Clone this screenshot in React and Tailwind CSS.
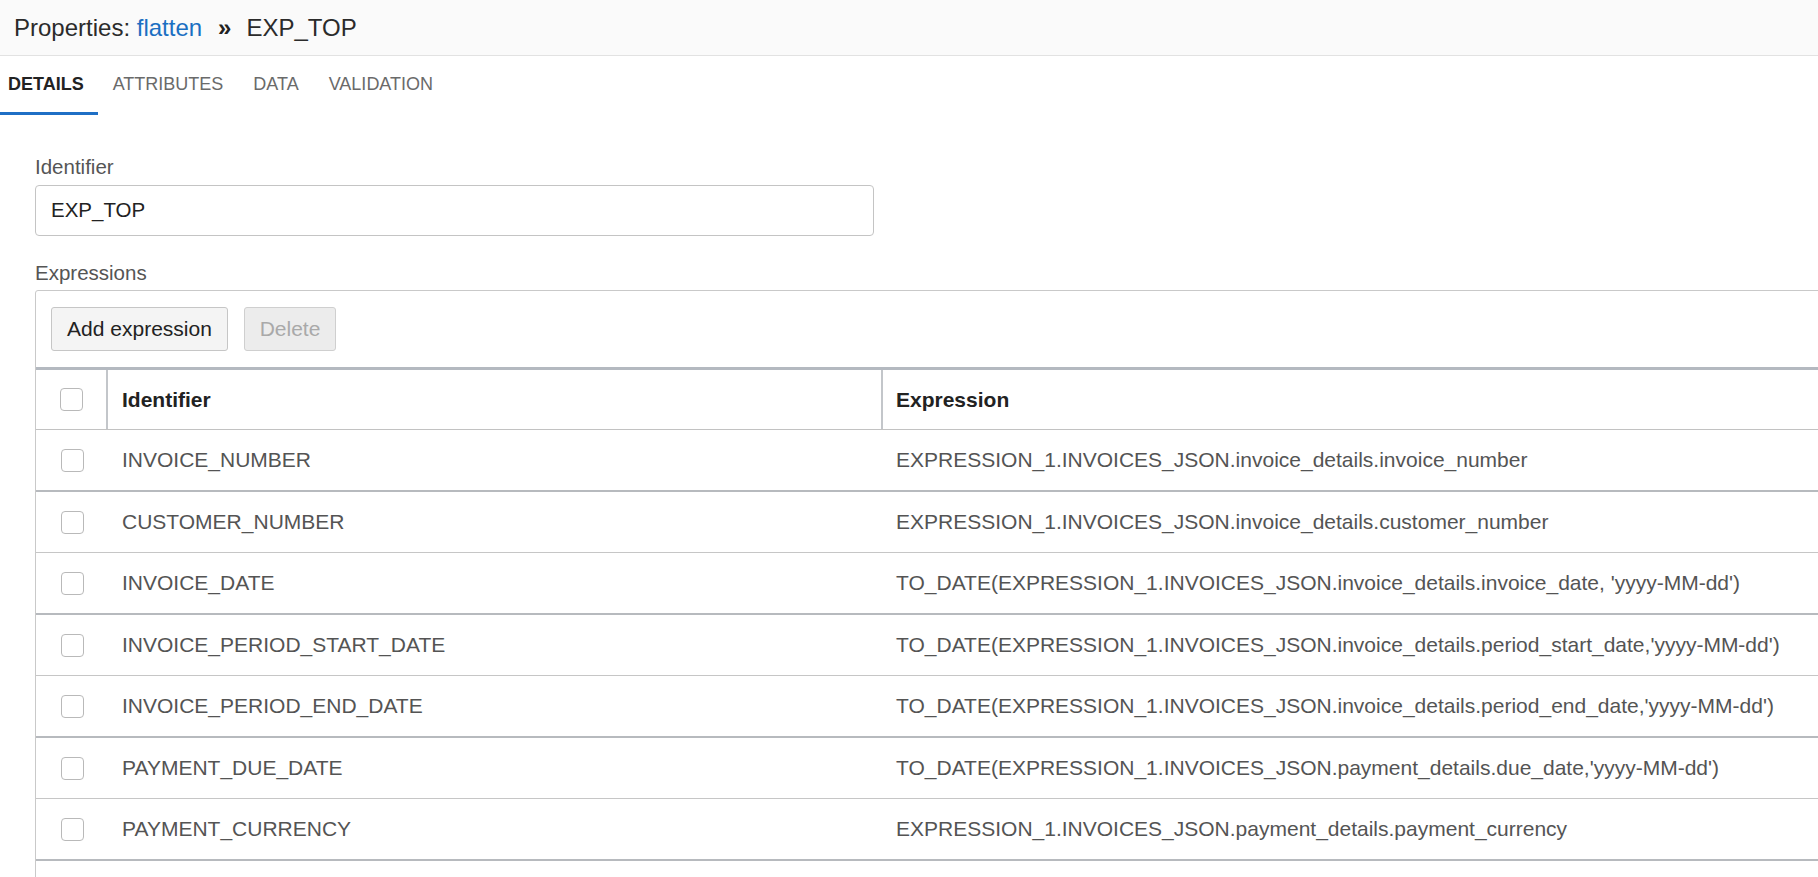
import React from "react";

const rows = [
  ["INVOICE_NUMBER", "EXPRESSION_1.INVOICES_JSON.invoice_details.invoice_number"],
  ["CUSTOMER_NUMBER", "EXPRESSION_1.INVOICES_JSON.invoice_details.customer_number"],
  ["INVOICE_DATE", "TO_DATE(EXPRESSION_1.INVOICES_JSON.invoice_details.invoice_date, 'yyyy-MM-dd')"],
  ["INVOICE_PERIOD_START_DATE", "TO_DATE(EXPRESSION_1.INVOICES_JSON.invoice_details.period_start_date,'yyyy-MM-dd')"],
  ["INVOICE_PERIOD_END_DATE", "TO_DATE(EXPRESSION_1.INVOICES_JSON.invoice_details.period_end_date,'yyyy-MM-dd')"],
  ["PAYMENT_DUE_DATE", "TO_DATE(EXPRESSION_1.INVOICES_JSON.payment_details.due_date,'yyyy-MM-dd')"],
  ["PAYMENT_CURRENCY", "EXPRESSION_1.INVOICES_JSON.payment_details.payment_currency"],
  ["", ""],
];

function Checkbox() {
  return (
    <span className="block w-[23px] h-[23px] rounded-[4px] border border-[#b9b9b9] bg-white" />
  );
}

export default function App() {
  return (
    <div className="h-screen w-full overflow-hidden bg-white font-['Liberation_Sans',Arial,sans-serif]">
      {/* Title bar */}
      <div className="h-[56px] bg-[#fafafa] border-b border-[#e2e2e2] flex items-center pl-[14px] text-[24px] text-[#2b2b2b]">
        <span>Properties:&nbsp;</span>
        <span className="text-[#1a6fc2]">flatten</span>
        <span className="font-bold text-[#222] pl-[16px] pr-[15px]">»</span>
        <span>EXP_TOP</span>
      </div>

      {/* Tabs */}
      <div className="h-[59px] flex text-[18px]">
        <div className="h-full flex items-center pl-[8px] pr-[14px] border-b-[3px] border-[#1f6fc5] font-bold text-[#222]">
          DETAILS
        </div>
        <div className="h-full flex items-center px-[15px] border-b-[3px] border-transparent text-[#6a6a6a]">
          ATTRIBUTES
        </div>
        <div className="h-full flex items-center px-[15px] border-b-[3px] border-transparent text-[#6a6a6a]">
          DATA
        </div>
        <div className="h-full flex items-center px-[15px] border-b-[3px] border-transparent text-[#6a6a6a]">
          VALIDATION
        </div>
      </div>

      {/* Content */}
      <div className="pl-[35px] pt-[40px]">
        <div className="text-[20.5px] leading-[24px] text-[#555]">Identifier</div>
        <div className="mt-[6px] w-[839px] h-[51px] rounded-[4px] border border-[#c4c4c4] flex items-center pl-[15px] text-[20.5px] text-[#222]">
          EXP_TOP
        </div>

        <div className="mt-[25px] text-[20.5px] leading-[24px] text-[#555]">Expressions</div>

        <div className="mt-[5px] mr-[-20px] border border-[#c9c9c9] rounded-tl-[3px]">
          {/* toolbar */}
          <div className="flex gap-[16px] px-[15px] pt-[16px] pb-[16px]">
            <button className="h-[44px] w-[177px] rounded-[3px] border border-[#c6c6c6] bg-[#f4f4f4] text-[21px] text-[#222]">
              Add expression
            </button>
            <button className="h-[44px] w-[92px] rounded-[3px] border border-[#cfcfcf] bg-[#ececec] text-[21px] text-[#a9a9a9]">
              Delete
            </button>
          </div>

          {/* header row */}
          <div className="flex h-[63px] border-t-[3px] border-b border-t-[#b4b9c0] border-b-[#c2c2c2]">
            <div className="w-[72px] shrink-0 flex items-center justify-center border-r-2 border-[#c3c6ca]">
              <Checkbox />
            </div>
            <div className="w-[775px] shrink-0 flex items-center pl-[14px] border-r-2 border-[#c3c6ca] text-[21px] font-bold text-[#222]">
              Identifier
            </div>
            <div className="flex-1 flex items-center pl-[13px] text-[21px] font-bold text-[#222]">
              Expression
            </div>
          </div>

          {rows.map((r, i) => (
            <div
              key={i}
              className={
                i % 2 === 0
                  ? "flex h-[62px] border-b-2 border-[#b7babe]"
                  : "flex h-[61px] border-b border-[#c6c6c6]"
              }
            >
              <div className="w-[72px] shrink-0 flex items-center justify-center">
                {r[0] !== "" && <Checkbox />}
              </div>
              <div className="w-[775px] shrink-0 flex items-center pl-[14px] text-[21px] text-[#545454] whitespace-nowrap">
                {r[0]}
              </div>
              <div className="flex-1 flex items-center pl-[13px] text-[21px] text-[#545454] whitespace-nowrap">
                {r[1]}
              </div>
            </div>
          ))}
        </div>
      </div>
    </div>
  );
}
